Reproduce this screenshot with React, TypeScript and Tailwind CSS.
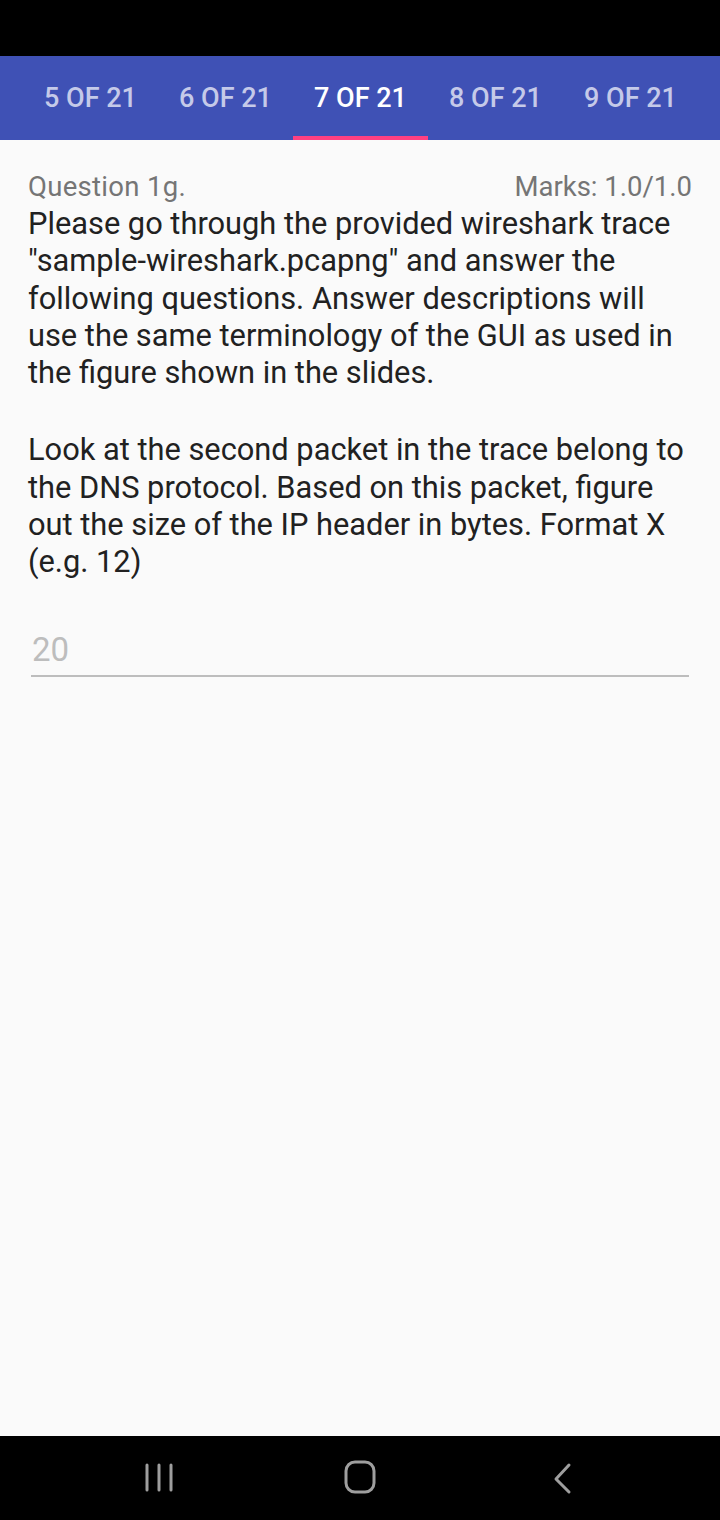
import React from 'react';

const tabs = ['5 OF 21', '6 OF 21', '7 OF 21', '8 OF 21', '9 OF 21'];
const active = 2;

export default function App() {
  return (
    <div className="w-[720px] h-[1520px] flex flex-col bg-[#fafafa] font-['Roboto',sans-serif]">
      {/* status bar */}
      <div className="h-[56px] bg-black" />

      {/* tab strip */}
      <div className="h-[84px] bg-[#3f51b5] flex pl-[23px]">
        {tabs.map((t, i) => (
          <div key={t} className="w-[135px] flex flex-col">
            <div
              className={`flex-1 flex items-center justify-center pt-[5px] text-[27px] font-medium ${
                i === active ? 'text-white' : 'text-[#c5cae9]'
              }`}
            >
              {t}
            </div>
            <div className={`h-[4px] ${i === active ? 'bg-[#ff4081]' : ''}`} />
          </div>
        ))}
      </div>

      {/* question body */}
      <div className="flex-1 px-[28px] pt-[31px]">
        <div className="flex justify-between items-baseline text-[27.5px] leading-[32px] text-[#757575]">
          <span className="tracking-[0.3px]">Question 1g.</span>
          <span>Marks: 1.0/1.0</span>
        </div>
        <p className="mt-[2px] text-[30.8px] leading-[37.3px] text-[#212121]">
          Please go through the provided wireshark trace "sample-wireshark.pcapng" and answer the following
          questions. Answer descriptions will use the same terminology of the GUI as used in the figure shown in the
          slides.
        </p>
        <p className="mt-[40px] text-[30.8px] leading-[37.3px] text-[#212121]">
          Look at the second packet in the trace belong to the DNS protocol. Based on this packet, figure out the size
          of the IP header in bytes. Format X (e.g. 12)
        </p>
        <div className="mt-[50px] mx-[3px] border-b-2 border-[#bdbdbd] pb-[6px]">
          <span className="block text-[33px] leading-[38px] text-[#bdbdbd] pl-[1px]">20</span>
        </div>
      </div>

      {/* navigation bar */}
      <div className="h-[84px] bg-black flex items-center justify-center gap-[161px]">
        <svg width="40" height="34" viewBox="0 0 40 34">
          <g stroke="#9e9e9e" strokeWidth="3" strokeLinecap="round">
            <line x1="8" y1="4" x2="8" y2="29" />
            <line x1="20" y1="4" x2="20" y2="29" />
            <line x1="32" y1="4" x2="32" y2="29" />
          </g>
        </svg>
        <svg width="40" height="36" viewBox="0 0 40 36">
          <rect x="6" y="2" width="28" height="30" rx="9" fill="none" stroke="#9e9e9e" strokeWidth="3" />
        </svg>
        <svg width="40" height="34" viewBox="0 0 40 34">
          <polyline points="28,4 15,18 28,31" fill="none" stroke="#9e9e9e" strokeWidth="3" strokeLinecap="round" strokeLinejoin="round" />
        </svg>
      </div>
    </div>
  );
}
